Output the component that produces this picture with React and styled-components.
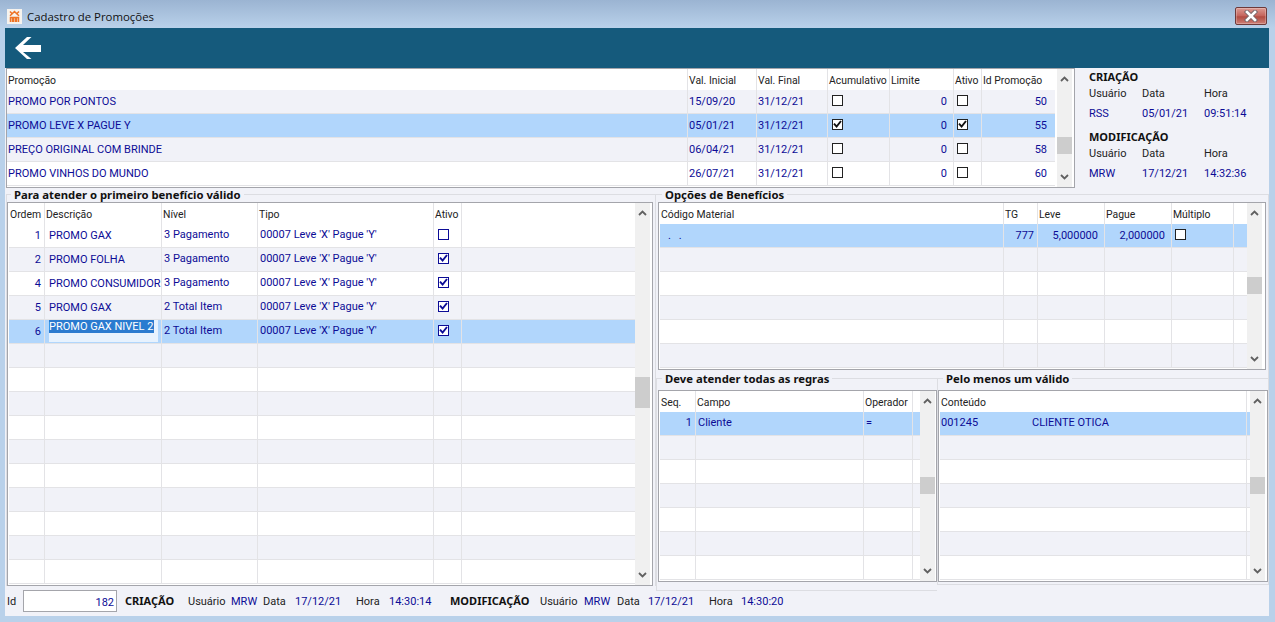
import React from 'react'
import styled, { createGlobalStyle } from 'styled-components'

const TOP_COLS = [681, 69, 71, 62, 64, 28, 73]
const LEFT_COLS = [36, 117, 96, 176, 28, 173]
const BENEFIT_COLS = [344, 34, 67, 67, 62, 13]
const RULE_COLS = [36, 168, 49, 7]
const VALID_COLS = [307, 3]

const NAVY = '#0c0c96'

const topRows = [
  ['PROMO POR PONTOS', '15/09/20', '31/12/21', false, '0', false, '50'],
  ['PROMO LEVE X PAGUE Y', '05/01/21', '31/12/21', true, '0', true, '55'],
  ['PREÇO ORIGINAL COM BRINDE', '06/04/21', '31/12/21', false, '0', false, '58'],
  ['PROMO VINHOS DO MUNDO', '26/07/21', '31/12/21', false, '0', false, '60'],
]

const leftRows = [
  ['1', 'PROMO GAX', '3 Pagamento', false],
  ['2', 'PROMO FOLHA', '3 Pagamento', true],
  ['4', 'PROMO CONSUMIDOR', '3 Pagamento', true],
  ['5', 'PROMO GAX', '2 Total Item', true],
  ['6', 'PROMO GAX NIVEL 2', '2 Total Item', true],
]

const GlobalStyle = createGlobalStyle`
  html, body { margin: 0; padding: 0; }
  body { font-family: Roboto, "Liberation Sans", sans-serif; font-size: 11px; }
  * { box-sizing: border-box; }
`

const Frame = styled.div`
  width: 1275px;
  height: 622px;
  display: flex;
  flex-direction: column;
  overflow: hidden;
  background: #b9d1ea;
`
const TitleBar = styled.div`
  height: 28px;
  flex: none;
  display: flex;
  align-items: center;
  padding: 4px 8px 0 7px;
  background: linear-gradient(#9bb4d2, #b9d1ea);
`
const WindowTitle = styled.span`
  margin-left: 5px;
  flex: 1;
  font: 11.4px "Open Sans", sans-serif;
  color: #111;
`
const CloseButton = styled.div`
  width: 32px;
  height: 18px;
  display: flex;
  align-items: center;
  justify-content: center;
  border: 1px solid #6e3a3a;
  border-radius: 2px;
  background: linear-gradient(#dc9a92, #c5655d 48%, #b14c42 55%, #cf7f76);
  box-shadow: inset 0 0 0 1px rgba(255, 255, 255, 0.25);
`
const Client = styled.div`
  flex: 1;
  margin: 0 6px 6px 5px;
  display: flex;
  flex-direction: column;
  background: #f1f2f8;
  color: #222;
`
const Toolbar = styled.div`
  height: 40px;
  flex: none;
  display: flex;
  align-items: center;
  padding-left: 10px;
  background: #155a7c;
`
const TopRow = styled.div`
  height: 120px;
  flex: none;
  display: flex;
  padding-left: 1px;
`
const InfoPanel = styled.div`
  margin-left: 14px;
  padding-top: 1px;
  display: flex;
  flex-direction: column;
`
const InfoBlock = styled.div`
  display: grid;
  grid-template-columns: 53px 62px auto;
  grid-template-rows: 16px 16px 24px;
  align-items: center;
  margin-bottom: 4px;
`
const InfoTitle = styled.div`
  grid-column: 1 / -1;
  margin-top: -2px;
  font: bold 11px "Noto Sans", sans-serif;
  color: #111;
`
const Label = styled.span`
  color: #222;
  white-space: nowrap;
`
const Value = styled.span`
  color: ${NAVY};
  white-space: nowrap;
`
const Middle = styled.div`
  height: 403px;
  flex: none;
  display: flex;
  padding: 6px 0 0 1px;
`
const Group = styled.div`
  position: relative;
  flex: none;
  width: ${(p) => p.$width}px;
  height: ${(p) => p.$height}px;
  padding-top: ${(p) => p.$top}px;
  padding-left: ${(p) => p.$pad || 0}px;
  border-top: 1px solid #dcdde2;
  border-left: ${(p) => (p.$noLeft ? 'none' : '1px solid #dcdde2')};
  border-right: ${(p) => (p.$noRight ? 'none' : '1px solid #dcdde2')};
  border-bottom: ${(p) => (p.$bottom ? '1px solid #dcdde2' : 'none')};
`
const Legend = styled.div`
  position: absolute;
  top: -7px;
  left: ${(p) => p.$left}px;
  padding: 0 3px;
  height: 14px;
  background: #f1f2f8;
  font: bold 11.3px/14px "Noto Sans", sans-serif;
  color: #111;
  white-space: nowrap;
`
const RightColumn = styled.div`
  flex: none;
  display: flex;
  flex-direction: column;
`
const LowerGroups = styled.div`
  display: flex;
`
const Grid = styled.div`
  width: ${(p) => p.$width}px;
  height: ${(p) => p.$height}px;
  flex: none;
  display: flex;
  padding-left: ${(p) => p.$inset}px;
  background: #fff;
  border: 1px solid #a4a5ab;
`
const Rows = styled.div`
  flex: none;
  display: flex;
  flex-direction: column;
`
const Row = styled.div`
  display: grid;
  grid-template-columns: ${(p) => p.$cols.map((c) => `${c}px`).join(' ')};
  height: ${(p) => (p.$head ? 21 : 24)}px;
  flex: none;
  background: ${(p) => (p.$selected ? '#b1d6fc' : p.$grey ? '#f1f2f8' : '#fff')};
  border-bottom: ${(p) => (p.$head ? 'none' : '1px solid #e3e3e6')};
`
const Cell = styled.div`
  display: flex;
  align-items: center;
  justify-content: ${(p) => (p.$right !== undefined ? 'flex-end' : 'flex-start')};
  padding-top: 0;
  padding-bottom: ${(p) => (p.$lift ? 2 : 0)}px;
  padding-left: ${(p) => p.$pad ?? 1}px;
  padding-right: ${(p) => p.$right ?? 0}px;
  border-right: 1px solid #e3e3e6;
  color: ${NAVY};
  white-space: nowrap;
  overflow: hidden;
  &:last-child { border-right: none; }
`
const HeadCell = styled(Cell)`
  padding-top: 1px;
  padding-left: 1px;
  font-size: 10.4px;
  color: #222;
`
const Editor = styled.div`
  width: 109px;
  height: 22px;
  align-self: flex-start;
  background: #e7f2fe;
  line-height: 13px;
`
const Selection = styled.span`
  display: inline-block;
  height: 13px;
  background: #2a7bd0;
  color: #fff;
  padding-right: 1px;
`
const Dots = styled.span`
  word-spacing: 5px;
`
const MaterialCode = styled.span`
  width: 91px;
  flex: none;
`
const Scrollbar = styled.div`
  width: 15px;
  flex: none;
  margin-left: ${(p) => p.$gap || 0}px;
  display: flex;
  flex-direction: column;
  background: #f0f0f0;
`
const Arrow = styled.div`
  height: 20px;
  flex: none;
  display: flex;
  align-items: center;
  justify-content: center;
`
const Track = styled.div`
  flex: 1;
`
const Thumb = styled.div`
  height: ${(p) => p.$size}px;
  margin-top: ${(p) => p.$offset}px;
  background: #cdcdcd;
`
const Box = styled.span`
  width: 11px;
  height: 11px;
  margin-bottom: 2px;
  flex: none;
  display: flex;
  background: #fff;
  border: 1px solid ${(p) => (p.$blue ? NAVY : '#222')};
`
const Footer = styled.div`
  height: 22px;
  margin-top: -1px;
  display: grid;
  grid-template-columns: 16px 102px 63px 43px 32px 32px 61px 33px 61px 90px 44px 33px 31px 61px 32px auto;
  align-items: center;
  padding-left: 2px;
`
const IdInput = styled.div`
  width: 94px;
  height: 22px;
  padding: 2px 2px 0 0;
  display: flex;
  align-items: center;
  justify-content: flex-end;
  background: #fff;
  border: 1px solid #a4a5ab;
  color: ${NAVY};
`
const FooterTitle = styled.span`
  margin-top: -2px;
  font: bold 11px "Noto Sans", sans-serif;
  color: #111;
  white-space: nowrap;
`

const AppIcon = () => (
  <svg width="15" height="15" viewBox="0 0 15 15">
    <rect width="15" height="15" fill="#f6f3ee" />
    <path d="M3 2.5l2.2 2.2L7.5 2.5l2.2 2.2L12 2.5M3 6.8l2.2-2.1M12 6.8L9.7 4.7M3.5 13V8.5h2V13M6.5 13V8.5h2V13M9.5 13V8.5h2V13" fill="none" stroke="#ee7426" strokeWidth="1.5" />
  </svg>
)

const CloseIcon = () => (
  <svg width="16" height="12" viewBox="0 0 16 12">
    <path d="M4 2l8 8M12 2l-8 8" stroke="#77676a" strokeWidth="4.4" strokeLinecap="square" />
    <path d="M4 2l8 8M12 2l-8 8" stroke="#fff" strokeWidth="2.6" strokeLinecap="square" />
  </svg>
)

const BackArrow = () => (
  <svg width="26" height="22" viewBox="0 0 26 22">
    <path d="M0 11L12 0h4.5L8 8h18v7H8l8.5 7H12z" fill="#fff" />
  </svg>
)

const Chevron = ({ down }) => (
  <svg width="9" height="6" viewBox="0 0 9 6">
    <path d={down ? 'M1 1l3.5 3.5L8 1' : 'M1 5l3.5-3.5L8 5'} fill="none" stroke="#606060" strokeWidth="1.8" />
  </svg>
)

const Check = ({ blue, checked }) => (
  <Box $blue={blue}>
    {checked && (
      <svg width="9" height="9" viewBox="0 0 9 9">
        <path d="M1 3.6l2.6 3L8 1" fill="none" stroke={blue ? NAVY : '#111'} strokeWidth="1.9" />
      </svg>
    )}
  </Box>
)

const Scroll = ({ offset, size, gap }) => (
  <Scrollbar $gap={gap}>
    <Arrow><Chevron /></Arrow>
    <Track><Thumb $offset={offset} $size={size} /></Track>
    <Arrow><Chevron down /></Arrow>
  </Scrollbar>
)

const Header = ({ cols, labels }) => (
  <Row $cols={cols} $head>
    {labels.map((label, i) => (
      <HeadCell key={i}>{label}</HeadCell>
    ))}
  </Row>
)

const EmptyRows = ({ cols, from, count, startGrey }) =>
  Array.from({ length: count }, (_, i) => (
    <Row key={from + i} $cols={cols} $grey={i % 2 === 0 ? startGrey : !startGrey}>
      {cols.map((_, c) => <Cell key={c} />)}
    </Row>
  ))

export default function App() {
  return (
    <Frame>
      <GlobalStyle />
      <TitleBar>
        <AppIcon />
        <WindowTitle>Cadastro de Promoções</WindowTitle>
        <CloseButton><CloseIcon /></CloseButton>
      </TitleBar>
      <Client>
        <Toolbar><BackArrow /></Toolbar>
        <TopRow>
          <Grid $width={1069} $height={120} $inset={0}>
            <Rows>
              <Header cols={TOP_COLS} labels={['Promoção', 'Val. Inicial', 'Val. Final', 'Acumulativo', 'Limite', 'Ativo', 'Id Promoção']} />
              {topRows.map((r, i) => (
                <Row key={i} $cols={TOP_COLS} $selected={i === 1} $grey={i % 2 === 0}>
                  <Cell>{r[0]}</Cell>
                  <Cell>{r[1]}</Cell>
                  <Cell>{r[2]}</Cell>
                  <Cell $pad={4}><Check checked={r[3]} /></Cell>
                  <Cell $right={6}>{r[4]}</Cell>
                  <Cell $pad={3}><Check checked={r[5]} /></Cell>
                  <Cell $right={8}>{r[6]}</Cell>
                </Row>
              ))}
            </Rows>
            <Scroll gap={2} offset={48} size={17} />
          </Grid>
          <InfoPanel>
            <InfoBlock>
              <InfoTitle>CRIAÇÃO</InfoTitle>
              <Label>Usuário</Label><Label>Data</Label><Label>Hora</Label>
              <Value>RSS</Value><Value>05/01/21</Value><Value>09:51:14</Value>
            </InfoBlock>
            <InfoBlock>
              <InfoTitle>MODIFICAÇÃO</InfoTitle>
              <Label>Usuário</Label><Label>Data</Label><Label>Hora</Label>
              <Value>MRW</Value><Value>17/12/21</Value><Value>14:32:36</Value>
            </InfoBlock>
          </InfoPanel>
        </TopRow>
        <Middle>
          <Group $width={650} $height={392} $top={7}>
            <Legend $left={4}>Para atender o primeiro benefício válido</Legend>
            <Grid $width={646} $height={384} $inset={1}>
              <Rows>
                <Header cols={LEFT_COLS} labels={['Ordem', 'Descrição', 'Nível', 'Tipo', 'Ativo', '']} />
                {leftRows.map((r, i) => (
                  <Row key={i} $cols={LEFT_COLS} $selected={i === 4} $grey={i % 2 === 1}>
                    <Cell $right={3}>{r[0]}</Cell>
                    <Cell $pad={4}>
                      {i === 4 ? <Editor><Selection>{r[1]}</Selection></Editor> : r[1]}
                    </Cell>
                    <Cell $pad={2} $lift>{r[2]}</Cell>
                    <Cell $pad={2} $lift>00007 Leve 'X' Pague 'Y'</Cell>
                    <Cell $pad={4}><Check blue checked={r[3]} /></Cell>
                    <Cell />
                  </Row>
                ))}
                <EmptyRows cols={LEFT_COLS} from={5} count={10} startGrey />
              </Rows>
              <Scroll offset={154} size={31} />
            </Grid>
          </Group>
          <RightColumn>
            <Group $width={613} $height={184} $top={7} $pad={2} $noLeft>
              <Legend $left={6}>Opções de Benefícios</Legend>
              <Grid $width={608} $height={168} $inset={1}>
                <Rows>
                  <Header cols={BENEFIT_COLS} labels={['Código Material', 'TG', 'Leve', 'Pague', 'Múltiplo', '']} />
                  <Row $cols={BENEFIT_COLS} $selected>
                    <Cell $pad={8}><Dots>. .</Dots></Cell>
                    <Cell $right={3}>777</Cell>
                    <Cell $right={6}>5,000000</Cell>
                    <Cell $right={6}>2,000000</Cell>
                    <Cell $pad={3}><Check /></Cell>
                    <Cell />
                  </Row>
                  <EmptyRows cols={BENEFIT_COLS} from={1} count={5} startGrey />
                </Rows>
                <Scroll offset={54} size={17} />
              </Grid>
            </Group>
            <LowerGroups>
              <Group $width={281} $height={213} $top={11} $pad={1} $noRight $bottom>
                <Legend $left={5}>Deve atender todas as regras</Legend>
                <Grid $width={279} $height={192} $inset={1}>
                  <Rows>
                    <Header cols={RULE_COLS} labels={['Seq.', 'Campo', 'Operador', '']} />
                    <Row $cols={RULE_COLS} $selected>
                      <Cell $right={3} $lift>1</Cell>
                      <Cell $pad={2} $lift>Cliente</Cell>
                      <Cell $pad={2} $lift>=</Cell>
                      <Cell />
                    </Row>
                    <EmptyRows cols={RULE_COLS} from={1} count={6} startGrey />
                  </Rows>
                  <Scroll offset={66} size={17} />
                </Grid>
              </Group>
              <Group $width={332} $height={207} $top={11} $bottom>
                <Legend $left={5}>Pelo menos um válido</Legend>
                <Grid $width={330} $height={192} $inset={1}>
                  <Rows>
                    <Header cols={VALID_COLS} labels={['Conteúdo', '']} />
                    <Row $cols={VALID_COLS} $selected>
                      <Cell $pad={1} $lift><MaterialCode>001245</MaterialCode>CLIENTE OTICA</Cell>
                      <Cell />
                    </Row>
                    <EmptyRows cols={VALID_COLS} from={1} count={6} startGrey />
                  </Rows>
                  <Scroll offset={66} size={17} />
                </Grid>
              </Group>
            </LowerGroups>
          </RightColumn>
        </Middle>
        <Footer>
          <Label>Id</Label>
          <IdInput>182</IdInput>
          <FooterTitle>CRIAÇÃO</FooterTitle>
          <Label>Usuário</Label>
          <Value>MRW</Value>
          <Label>Data</Label>
          <Value>17/12/21</Value>
          <Label>Hora</Label>
          <Value>14:30:14</Value>
          <FooterTitle>MODIFICAÇÃO</FooterTitle>
          <Label>Usuário</Label>
          <Value>MRW</Value>
          <Label>Data</Label>
          <Value>17/12/21</Value>
          <Label>Hora</Label>
          <Value>14:30:20</Value>
        </Footer>
      </Client>
    </Frame>
  )
}
